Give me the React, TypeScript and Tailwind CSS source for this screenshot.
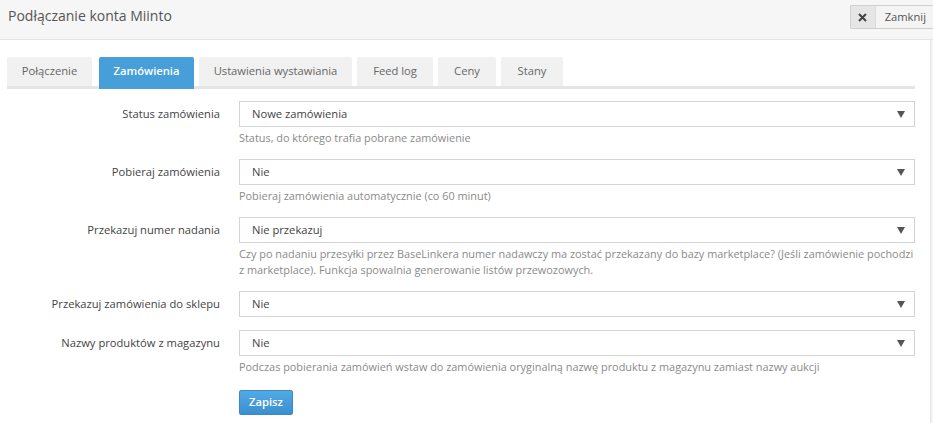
import React from "react";

const tabs: { name: string; w: string }[] = [
  { name: "Połączenie", w: "w-[85px] mr-[2px]" },
  { name: "Zamówienia", w: "w-[95px]" },
  { name: "Ustawienia wystawiania", w: "w-[153px]" },
  { name: "Feed log", w: "w-[76px]" },
  { name: "Ceny", w: "w-[58px]" },
  { name: "Stany", w: "w-[62px]" },
];

type Field = { label: string; value: string; help?: string };

const fields: Field[] = [
  { label: "Status zamówienia", value: "Nowe zamówienia", help: "Status, do którego trafia pobrane zamówienie" },
  { label: "Pobieraj zamówienia", value: "Nie", help: "Pobieraj zamówienia automatycznie (co 60 minut)" },
  {
    label: "Przekazuj numer nadania",
    value: "Nie przekazuj",
    help: "Czy po nadaniu przesyłki przez BaseLinkera numer nadawczy ma zostać przekazany do bazy marketplace? (Jeśli zamówienie pochodzi z marketplace). Funkcja spowalnia generowanie listów przewozowych.",
  },
  { label: "Przekazuj zamówienia do sklepu", value: "Nie" },
  {
    label: "Nazwy produktów z magazynu",
    value: "Nie",
    help: "Podczas pobierania zamówień wstaw do zamówienia oryginalną nazwę produktu z magazynu zamiast nazwy aukcji",
  },
];

const SelectBox: React.FC<{ value: string }> = ({ value }) => (
  <div className="h-[26px] border border-[#d4d4d4] bg-white flex items-center justify-between pl-[12px] pr-[8px] text-[11.2px] text-[#444]">
    <span>{value}</span>
    <svg width="8" height="7" viewBox="0 0 8 7" className="mr-[1px]">
      <path d="M0 0 H8 L4 7 Z" fill="#555" />
    </svg>
  </div>
);

export default function App() {
  return (
    <div className="w-[933px] h-[423px] bg-white overflow-hidden flex flex-col" style={{ fontFamily: '"Open Sans", "Liberation Sans", sans-serif' }}>
      {/* header */}
      <div className="h-[40px] shrink-0 bg-[#f6f6f6] border-b border-[#e4e4e4] flex items-start justify-between">
        <h1 className="pl-[8px] pt-[5px] text-[14px] leading-[22px] text-[#555] font-normal">Podłączanie konta Miinto</h1>
        <button className="mt-[5px] h-[24px] flex items-stretch border border-[#cfcfcf] border-r-0 rounded-l-[2px] text-[11.2px] text-[#555]">
          <span className="w-[25px] bg-[#e6e6e6] flex items-center justify-center border-r border-[#dcdcdc]">
            <svg width="9" height="9" viewBox="0 0 9 9">
              <path d="M1 1 L8 8 M8 1 L1 8" stroke="#444" strokeWidth="2" />
            </svg>
          </span>
          <span className="bg-[#f4f4f4] pl-[9px] pr-[7px] flex items-center">Zamknij</span>
        </button>
      </div>

      {/* body */}
      <div className="flex-1 flex">
        <div className="flex-1 border-r border-[#e6e6e6] pl-[7px] pr-[15px] pt-[17px]">
          <div className="flex gap-[5px] border-b-[3px] border-[#e5e5e5]">
            {tabs.map((t, i) => (
              <div
                key={t.name}
                className={
                  (i === 1
                    ? "-mb-[3px] h-[32px] pb-[3px] flex items-center justify-center rounded-t-[2px] bg-[#479fd9] text-white font-semibold text-[11.2px] "
                    : "h-[29px] flex items-center justify-center rounded-t-[2px] bg-[#f1f1f1] text-[#666] text-[11.2px] ") + t.w
                }
              >
                {t.name}
              </div>
            ))}
          </div>

          <div className="pt-[12px]">
            {fields.map((f) => (
              <div key={f.label} className="flex mb-[13px]">
                <div className="w-[232px] shrink-0 pr-[19px] h-[26px] flex items-center justify-end text-[11.2px] text-[#444]">
                  {f.label}
                </div>
                <div className="flex-1">
                  <SelectBox value={f.value} />
                  {f.help && <p className="mt-[3px] text-[10.9px] leading-[16px] text-[#8a8a8a]">{f.help}</p>}
                </div>
              </div>
            ))}
            <div className="pl-[232px]">
              <button className="h-[25px] px-[9px] rounded-[2px] border border-[#3a8ac6] bg-gradient-to-b from-[#52aae4] to-[#3a8fd0] text-white font-semibold text-[11.2px]">
                Zapisz
              </button>
            </div>
          </div>
        </div>
        <div className="w-[2px] bg-[#f5f5f5]" />
      </div>
    </div>
  );
}
